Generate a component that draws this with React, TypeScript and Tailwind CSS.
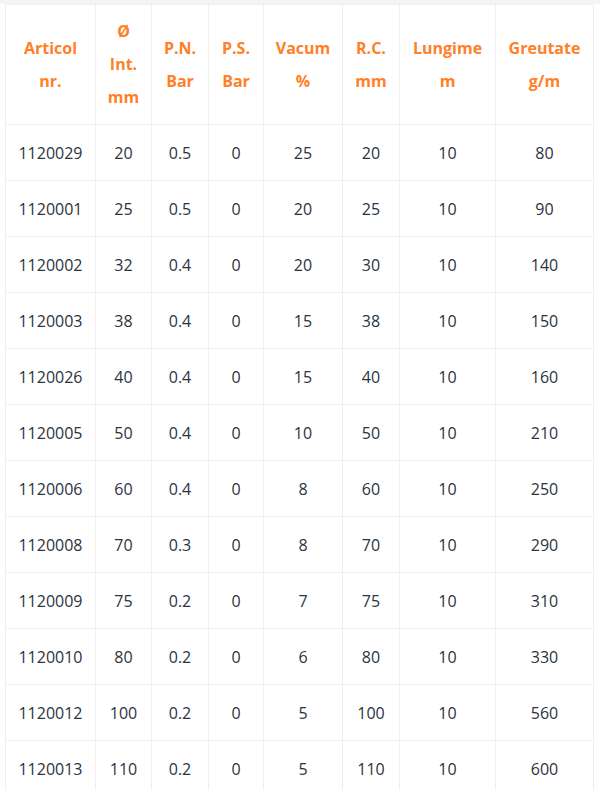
import React from "react";

const headers: string[][] = [
  ["Articol", "nr."],
  ["Ø", "Int.", "mm"],
  ["P.N.", "Bar"],
  ["P.S.", "Bar"],
  ["Vacum", "%"],
  ["R.C.", "mm"],
  ["Lungime", "m"],
  ["Greutate", "g/m"],
];

const widths = [
  "w-[90px]",
  "w-[56px]",
  "w-[57px]",
  "w-[55px]",
  "w-[79px]",
  "w-[57px]",
  "w-[96px]",
  "w-[98px]",
];

const rows: string[][] = [
  ["1120029", "20", "0.5", "0", "25", "20", "10", "80"],
  ["1120001", "25", "0.5", "0", "20", "25", "10", "90"],
  ["1120002", "32", "0.4", "0", "20", "30", "10", "140"],
  ["1120003", "38", "0.4", "0", "15", "38", "10", "150"],
  ["1120026", "40", "0.4", "0", "15", "40", "10", "160"],
  ["1120005", "50", "0.4", "0", "10", "50", "10", "210"],
  ["1120006", "60", "0.4", "0", "8", "60", "10", "250"],
  ["1120008", "70", "0.3", "0", "8", "70", "10", "290"],
  ["1120009", "75", "0.2", "0", "7", "75", "10", "310"],
  ["1120010", "80", "0.2", "0", "6", "80", "10", "330"],
  ["1120012", "100", "0.2", "0", "5", "100", "10", "560"],
  ["1120013", "110", "0.2", "0", "5", "110", "10", "600"],
];

export default function App() {
  return (
    <div className="min-h-[790px] bg-white font-['Open_Sans',sans-serif]">
      <div className="h-[4px] bg-[#f4f4f4]" />
      <div className="pl-[5px]">
        <table className="table-fixed border-collapse w-[588px] border border-[#efefef]">
          <thead>
            <tr className="h-[120px]">
              {headers.map((lines, i) => (
                <th
                  key={i}
                  className={`${widths[i]} border border-[#efefef] p-0 text-center align-middle text-[16px] font-bold leading-[33px] text-[#ff8027]`}
                >
                  {lines.map((l, j) => (
                    <div key={j}>{l}</div>
                  ))}
                </th>
              ))}
            </tr>
          </thead>
          <tbody>
            {rows.map((r) => (
              <tr key={r[0]} className="h-[56px]">
                {r.map((c, i) => (
                  <td
                    key={i}
                    className="border border-[#efefef] p-0 text-center align-middle text-[16px] text-[#2b3340]"
                  >
                    {c}
                  </td>
                ))}
              </tr>
            ))}
          </tbody>
        </table>
      </div>
    </div>
  );
}
